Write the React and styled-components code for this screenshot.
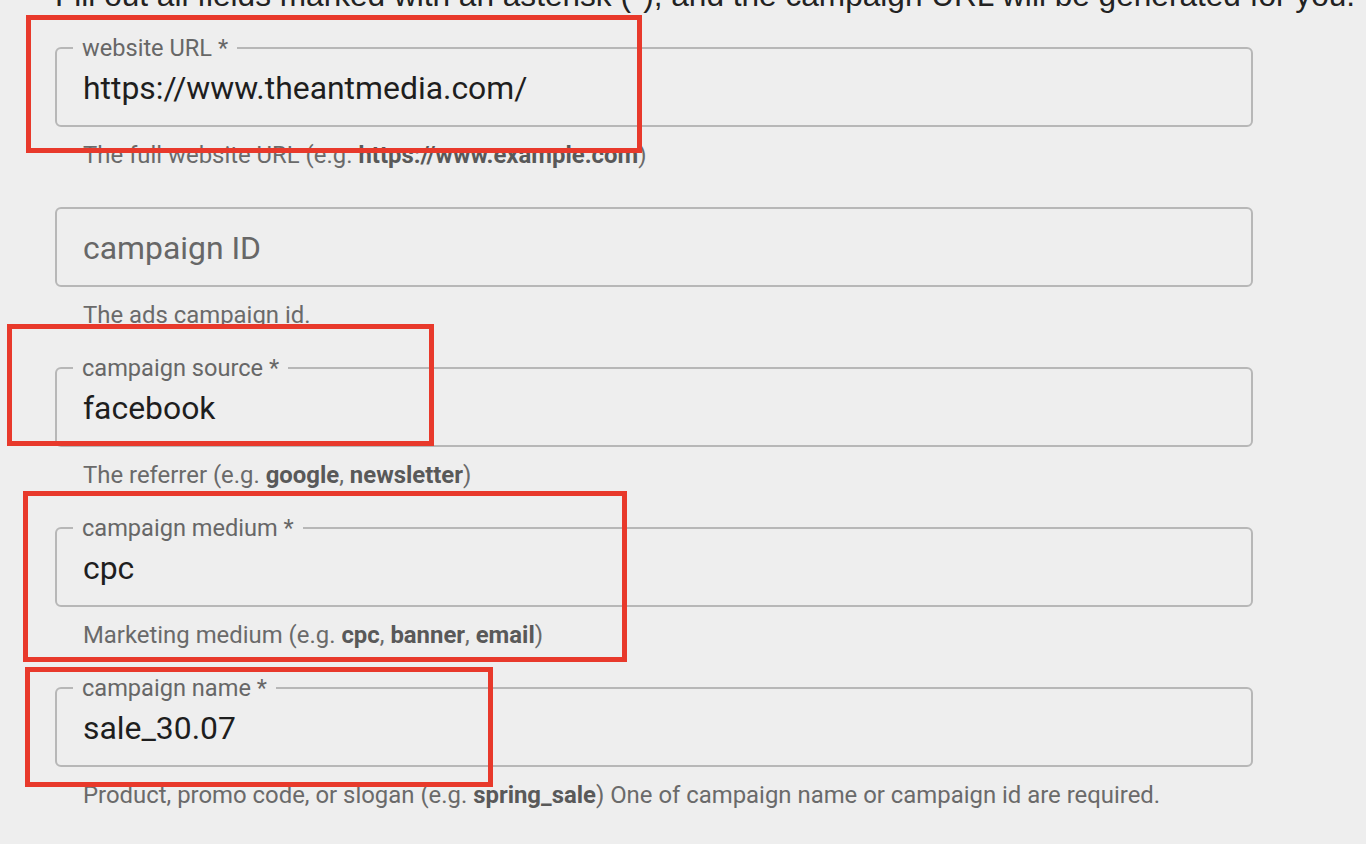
import React from 'react'
import styled, { createGlobalStyle, css } from 'styled-components'

const GlobalStyle = createGlobalStyle`
    html, body {
        margin: 0;
        background: #eeeeee;
    }
    body {
        font-family: Roboto, "Noto Sans", sans-serif;
        overflow: hidden;
    }
`

const Page = styled.div`
    position: relative;
    box-sizing: border-box;
    width: 1366px;
    height: 844px;
    overflow: hidden;
    padding: 0 113px 0 55px;
`

// the page is scrolled a little, so only the foot of this line shows
const Intro = styled.p`
    margin: -22px 0 0 0;
    font-family: "Liberation Sans", Arial, sans-serif;
    font-size: 31.6px;
    line-height: 34px;
    color: #222;
    white-space: nowrap;
`

const Form = styled.div`
    display: flex;
    flex-direction: column;
    gap: 28px;
    margin-top: 24px;
`

const Group = styled.div`
    display: flex;
    flex-direction: column;
`

const Field = styled.fieldset`
    margin: 0;
    min-width: 0;
    padding: 0 26px 19px;
    border: 2px solid #b7b7b7;
    border-radius: 6px;
`

const Label = styled.legend`
    margin-left: -10px;
    padding: 0 9px;
    font-size: 23.6px;
    line-height: 24px;
    color: #676767;
    white-space: nowrap;

    ${p => p.$hidden && css`
        max-width: 0.01px;
        padding: 0;
        overflow: hidden;
        visibility: hidden;
    `}
`

const Value = styled.div`
    margin-top: 10px;
    font-size: 31.9px;
    line-height: 36px;
    color: ${p => p.$placeholder ? '#676767' : '#1e1e1e'};
    white-space: nowrap;
`

const Helper = styled.div`
    margin-top: 15px;
    padding-left: 28px;
    font-size: 23.9px;
    line-height: 26px;
    color: #6a6a6a;
    white-space: nowrap;

    b {
        font-weight: 700;
        color: #595959;
    }
`

// red annotation frames drawn over the screenshot
const Mark = styled.div`
    position: absolute;
    box-sizing: border-box;
    left: ${p => p.$x}px;
    top: ${p => p.$y}px;
    width: ${p => p.$w}px;
    height: ${p => p.$h}px;
    border: 5px solid #e8392b;
    pointer-events: none;
`

const fields = [
    {
        label: 'website URL *',
        value: 'https://www.theantmedia.com/',
        help: <>The full website URL (e.g. <b>https://www.example.com</b>)</>,
    },
    {
        label: 'campaign ID',
        placeholder: true,
        value: 'campaign ID',
        help: <>The ads campaign id.</>,
    },
    {
        label: 'campaign source *',
        value: 'facebook',
        help: <>The referrer (e.g. <b>google</b>, <b>newsletter</b>)</>,
    },
    {
        label: 'campaign medium *',
        value: 'cpc',
        help: <>Marketing medium (e.g. <b>cpc</b>, <b>banner</b>, <b>email</b>)</>,
    },
    {
        label: 'campaign name *',
        value: 'sale_30.07',
        help: <>Product, promo code, or slogan (e.g. <b>spring_sale</b>) One of campaign name or campaign id are required.</>,
    },
]

const marks = [
    { x: 26, y: 15, w: 616, h: 138 },
    { x: 7, y: 324, w: 427, h: 122 },
    { x: 23, y: 491, w: 604, h: 171 },
    { x: 25, y: 667, w: 468, h: 120 },
]

export default function App() {
    return (
        <Page>
            <GlobalStyle />
            <Intro>Fill out all fields marked with an asterisk (*), and the campaign URL will be generated for you.</Intro>
            <Form>
                {fields.map((field, index) => (
                    <Group key={index}>
                        <Field>
                            <Label $hidden={field.placeholder}>{field.label}</Label>
                            <Value $placeholder={field.placeholder}>{field.value}</Value>
                        </Field>
                        <Helper>{field.help}</Helper>
                    </Group>
                ))}
            </Form>
            {marks.map((m, index) => (
                <Mark key={index} $x={m.x} $y={m.y} $w={m.w} $h={m.h} />
            ))}
        </Page>
    )
}
